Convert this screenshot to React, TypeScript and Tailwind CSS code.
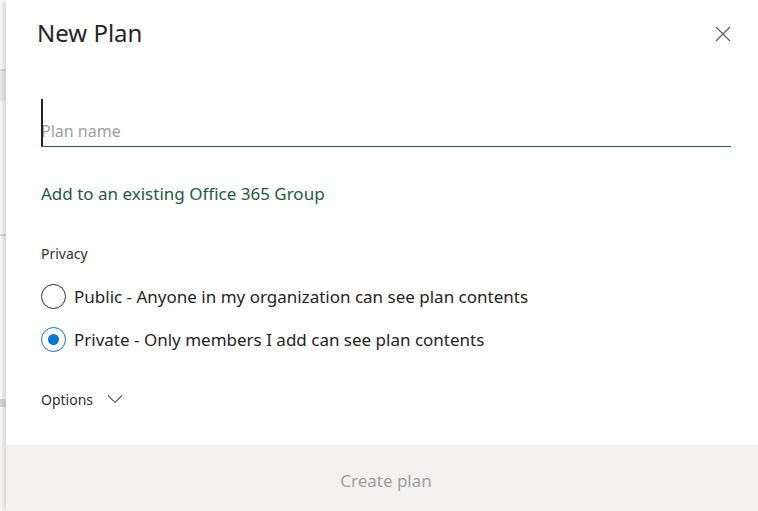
import React from "react";

export default function App() {
  return (
    <div
      className="flex h-[511px] w-[758px] overflow-hidden bg-[#f3f2f1]"
      style={{ fontFamily: '"Noto Sans", "Open Sans", sans-serif' }}
    >
      {/* page behind the panel */}
      <div className="flex w-[6px] flex-col bg-white">
        <div className="h-[69px]" />
        <div className="h-[2px] bg-[#e1dfdd]" />
        <div className="h-[30px] bg-[#f3f2f1]" />
        <div className="h-[133px]" />
        <div className="h-[2px] bg-[#e1dfdd]" />
        <div className="h-[163px]" />
        <div className="h-[8px] bg-[#e1dfdd]" />
        <div className="flex-1" />
      </div>

      <div className="relative flex flex-1 flex-col bg-white shadow-[-3px_0_6px_rgba(0,0,0,0.18)]">
        <div className="flex-1 pl-[35px] pr-[27px]">
          <div className="flex items-center justify-between pt-[17px]">
            <h1 className="-ml-[4px] text-[24px] leading-[32px] font-normal text-[#252423]">New Plan</h1>
            <button className="mt-[2px] text-[#605e5c]">
              <svg width="16" height="16" viewBox="0 0 16 16" fill="none" stroke="currentColor" strokeWidth="1.2">
                <path d="M1 1l14 14M15 1L1 15" />
              </svg>
            </button>
          </div>

          <div className="relative mt-[50px] flex h-[48px] items-end border-b border-[#2f5f4a]">
            <div className="absolute left-0 top-0 h-[47px] w-[2px] bg-[#252423]" />
            <span className="pb-[3px] text-[16px] text-[#a19f9d]">Plan name</span>
          </div>

          <div className="mt-[34px] text-[17px] text-[#1e5b3d]">Add to an existing Office 365 Group</div>

          <div className="mt-[36px] text-[14px] text-[#323130]">Privacy</div>

          <div className="mt-[20px] flex flex-col gap-[18px]">
            <label className="flex items-center gap-[8px] text-[17px] text-[#252423]">
              <span className="h-[25px] w-[25px] rounded-full border border-[#323130]" />
              Public - Anyone in my organization can see plan contents
            </label>
            <label className="flex items-center gap-[8px] text-[17px] text-[#252423]">
              <span className="flex h-[25px] w-[25px] items-center justify-center rounded-full border border-[#0078d4]">
                <span className="h-[11px] w-[11px] rounded-full bg-[#0078d4]" />
              </span>
              Private - Only members I add can see plan contents
            </label>
          </div>

          <div className="mt-[36px] flex items-center gap-[14px] text-[14px] text-[#323130]">
            Options
            <svg width="16" height="10" viewBox="0 0 16 10" fill="none" stroke="#605e5c" strokeWidth="1.1">
              <path d="M1 1.5l7 7 7-7" />
            </svg>
          </div>
        </div>

        <div className="flex h-[66px] items-center justify-center bg-[#f3f2f1] pl-[8px] pt-[6px]">
          <span className="text-[17px] text-[#a19f9d]">Create plan</span>
        </div>
      </div>
    </div>
  );
}
